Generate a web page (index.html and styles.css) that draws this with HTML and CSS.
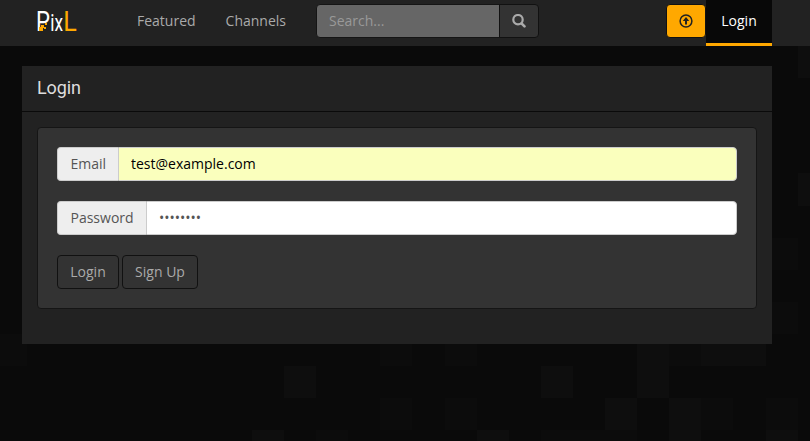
FILE: index.html
```html
<!DOCTYPE html>
<html lang="en">
<head>
<meta charset="utf-8">
<title>PixL - Login</title>
<link rel="stylesheet" href="styles.css">
</head>
<body>
<svg class="backdrop" width="810" height="441" viewBox="0 0 810 441" aria-hidden="true">
  <g fill="#0e0e0e">
    <path d="M798 173h12v33h-12zM284 366h32v32h-32zM541 366h32v32h-32zM637 334h32v64h-32zM701 334h65v32h-65zM605 398h32v32h-32zM669 398h32v43h-32zM252 430h32v11h-32zM477 430h32v11h-32zM766 430h32v11h-32zM798 46h12v32h-12z"/>
  </g>
  <g fill="#0c0c0c">
    <path d="M0 334h27v32H0zM380 334h32v32h-32zM445 334h32v32h-32zM669 334h32v32h-32zM701 398h32v32h-32zM766 398h32v32h-32zM380 398h32v32h-32zM445 398h32v32h-32zM316 430h32v11h-32zM541 430h96v11h-96zM766 238h32v32h-32zM766 302h32v32h-32z"/>
  </g>
</svg>
<header class="navbar">
  <a class="brand" aria-label="PixL">
    <svg width="40" height="22" viewBox="0 0 40 22">
      <text class="mark cap" x="-1" y="21" textLength="14" lengthAdjust="spacingAndGlyphs">P</text>
      <text class="mark low" x="13.200" y="21" textLength="12.800" lengthAdjust="spacingAndGlyphs">ix</text>
      <text class="mark cap accent" x="26.200" y="21" textLength="13.500" lengthAdjust="spacingAndGlyphs">L</text>
      <path d="M2 21v-4h2v-2h3v2h2v2H7v-1H6v3zM8 13h2v2H8z" fill="#ffa800"/>
    </svg>
  </a>
  <nav class="links"><a>Featured</a><a>Channels</a></nav>
  <form class="search">
    <input type="text" placeholder="Search..." aria-label="Search">
    <button type="button" aria-label="Search">
      <svg width="14" height="14" viewBox="0 0 14 14" fill="none" stroke="#aaa"><circle cx="6" cy="5.700" r="4.700" stroke-width="2.200"/><path d="M9.500 9.300l3 3" stroke-width="2.600" stroke-linecap="round"/></svg>
    </button>
  </form>
  <div class="account">
    <button class="upload" type="button" aria-label="Upload">
      <svg width="14" height="14" viewBox="0 0 14 14"><circle cx="7" cy="7" r="5.900" fill="none" stroke="#222" stroke-width="1.500"/><path d="M7 3L3.800 7H6v3.500h2V7h2.200z" fill="#222"/></svg>
    </button>
    <a class="tab">Login</a>
  </div>
</header>
<main class="panel">
  <h1>Login</h1>
  <form class="well">
    <div class="field email"><label for="email">Email</label><input class="autofill" id="email" type="text" value="test@example.com"></div>
    <div class="field password"><label for="password">Password</label><input id="password" type="text" value="••••••••"></div>
    <div class="actions"><button class="login" type="button">Login</button><button class="signup" type="button">Sign Up</button></div>
  </form>
</main>
</body>
</html>
```
FILE: styles.css
```css
* { box-sizing: border-box; }
body {
  margin: 0;
  height: 441px;
  overflow: hidden;
  background: #0a0a0a;
  color: #aaa;
  font: 14px/20px "Open Sans", sans-serif;
}
input, button { font: inherit; margin: 0; }
.backdrop { position: absolute; inset: 0; z-index: -1; }
.navbar {
  display: flex;
  height: 46px;
  padding: 0 38px 0 37px;
  background: #222;
}
.brand { width: 85px; padding-top: 10px; }
.brand svg { overflow: visible; }
.mark { fill: #fff; font-family: Roboto, sans-serif; font-weight: 400; }
.cap { font-size: 27.500px; }
.low { font-size: 23px; }
.accent { fill: #ffa800; }
.links { display: flex; }
.links a { padding: 11px 15px; }
.links a + a { padding-right: 30px; }
.search { display: flex; width: 223px; height: 34px; margin-top: 4px; }
.search input {
  flex: 1;
  min-width: 0;
  padding: 6px 12px;
  border: 1px solid #151515;
  border-radius: 4px 0 0 4px;
  background: #666;
}
.search input::placeholder { color: #999; opacity: 1; }
.search button {
  width: 40px;
  margin-left: -1px;
  padding: 8px 12px;
  border: 1px solid #111;
  border-radius: 0 4px 4px 0;
  background: #333;
}
.search svg, .upload svg, .brand svg { display: block; }
.search svg { margin-top: -1px; }
.upload svg { margin-top: -1px; }
.account { display: flex; margin-left: auto; }
.upload {
  width: 40px;
  height: 34px;
  margin-top: 4px;
  padding: 8px 12px;
  border: 1px solid #111;
  border-radius: 4px;
  background: #ffa800;
}
.tab {
  width: 66px;
  padding: 11px 0 12px;
  border-bottom: 3px solid #ffa800;
  background: #080808;
  color: #fff;
  text-align: center;
}
.panel {
  width: 750px;
  height: 278px;
  margin: 20px 0 0 22px;
  background: #222;
}
h1 {
  height: 46px;
  margin: 0;
  padding: 11px 15px;
  border-bottom: 1px solid #0a0a0a;
  color: #ddd;
  font: 400 18px/22px Roboto, sans-serif;
  letter-spacing: -0.1px;
}
.well {
  height: 182px;
  margin: 15px 15px 0;
  padding: 19px;
  border: 1px solid #151515;
  border-radius: 4px;
  background: #333;
}
.field { display: flex; height: 34px; margin-bottom: 20px; }
.field label {
  width: 61px;
  padding: 6px 0 6px 12.500px;
  border: 1px solid #ccc;
  border-right: 0;
  border-radius: 4px 0 0 4px;
  background: #eee;
  color: #555;
}
.password label { width: 89px; }
.field input {
  flex: 1;
  min-width: 0;
  padding: 6px 12px;
  border: 1px solid #ccc;
  border-radius: 0 4px 4px 0;
  background: #fff;
  color: #555;
}
.field .autofill { background: #faffbd; color: #000; }
.actions { display: flex; gap: 3px; }
.actions button {
  height: 34px;
  padding: 6px 0;
  border: 1px solid #111;
  border-radius: 4px;
  background: #333;
  color: #aaa;
}
.actions .login { width: 62px; }
.actions .signup { width: 76px; }
```
